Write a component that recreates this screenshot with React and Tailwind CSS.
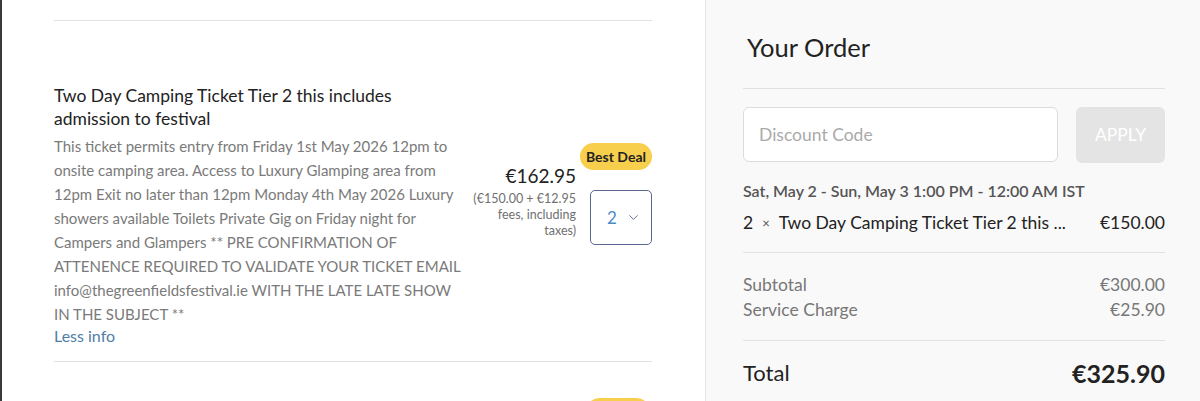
import { ChevronDown } from 'lucide-react';

const description =
  'This ticket permits entry from Friday 1st May 2026 12pm to onsite camping area. Access to Luxury Glamping area from 12pm Exit no later than 12pm Monday 4th May 2026 Luxury showers available Toilets Private Gig on Friday night for Campers and Glampers ** PRE CONFIRMATION OF ATTENENCE REQUIRED TO VALIDATE YOUR TICKET EMAIL info@thegreenfieldsfestival.ie WITH THE LATE LATE SHOW IN THE SUBJECT **';

function TicketRow() {
  return (
    <div className="flex pt-[63px] pb-[15px] border-b border-[#e2e2e2]">
      {/* Ticket info */}
      <div className="w-[412px]">
        <h3 className="text-[17.5px] leading-[23px] text-[#222]">
          Two Day Camping Ticket Tier 2 this includes admission to festival
        </h3>
        <p className="mt-[4px] text-[15px] leading-[24px] text-[#7a7a7a]">{description}</p>
        <button className="block text-[16px] leading-[20px] text-[#4f7ea6]">Less info</button>
      </div>

      {/* Price */}
      <div className="ml-auto mt-[79px] flex flex-col items-end">
        <div className="text-[19px] leading-[26px] text-[#222]">€162.95</div>
        <div className="mt-[2px] w-[104px] text-right text-[12.5px] leading-[16px] text-[#707070]">
          (€150.00 + €12.95 fees, including taxes)
        </div>
      </div>

      {/* Quantity */}
      <div className="ml-[4px] mt-[59px] flex flex-col items-end">
        <span className="h-[27px] w-[72px] whitespace-nowrap text-center rounded-full bg-[#f7cf4d] text-[14px] leading-[27px] font-bold text-[#222]">
          Best Deal
        </span>
        <div className="mt-[20px] w-[62px] h-[55px] rounded-[5px] border-[1.5px] border-[#5a6890] flex items-center pl-[16px] gap-[9px] text-[#4a8cc4]">
          <span className="text-[17px]">2</span>
          <ChevronDown size={15} strokeWidth={1.5} className="text-[#5a6890]" />
        </div>
      </div>
    </div>
  );
}

function OrderPanel() {
  return (
    <aside className="w-[495px] h-full bg-[#f9f9f9] border-l border-[#e6e6e6] pl-[37px] pr-[35px]">
      <h2 className="pt-[32px] pl-[4px] text-[25.5px] leading-[30px] text-[#222]">Your Order</h2>
      <div className="mt-[26px] border-t border-[#e0e0e0]" />

      <div className="mt-[18px] flex gap-[18px]">
        <input
          placeholder="Discount Code"
          className="w-[315px] h-[55px] rounded-[6px] border border-[#dcdcdc] bg-white pl-[15px] text-[17.5px] placeholder:text-[#aaa] outline-none"
        />
        <button className="flex-1 h-[56px] rounded-[6px] bg-[#e4e4e4] text-white text-[17.5px]">APPLY</button>
      </div>

      <div className="mt-[18px] text-[16px] leading-[20px] font-semibold text-[#555]">
        Sat, May 2 - Sun, May 3 1:00 PM - 12:00 AM IST
      </div>
      <div className="mt-[12px] flex items-center text-[17.5px] leading-[20px] text-[#222]">
        <span>2</span>
        <span className="mx-[9px] text-[13px] text-[#555]">×</span>
        <span className="whitespace-nowrap">Two Day Camping Ticket Tier 2 this ...</span>
        <span className="ml-auto">€150.00</span>
      </div>
      <div className="mt-[19px] border-t border-[#e2e2e2]" />

      <div className="mt-[19px] flex justify-between text-[17.5px] leading-[25px] text-[#777]">
        <span>Subtotal</span>
        <span>€300.00</span>
      </div>
      <div className="flex justify-between text-[17.5px] leading-[25px] text-[#777]">
        <span>Service Charge</span>
        <span>€25.90</span>
      </div>
      <div className="mt-[18px] border-t border-[#e2e2e2]" />

      <div className="mt-[17px] flex justify-between items-center text-[#222]">
        <span className="text-[22px] leading-[30px]">Total</span>
        <span className="text-[25px] leading-[30px] font-bold">€325.90</span>
      </div>
    </aside>
  );
}

export default function App() {
  return (
    <div className="h-[401px] w-[1200px] overflow-hidden bg-white flex font-['Lato','Liberation_Sans',sans-serif]">
      <div className="w-[705px] border-l-[2px] border-[#3a3a3a]">
        <div className="ml-[52px] w-[598px]">
          <div className="h-[21px] border-b border-[#e2e2e2]" />
          <TicketRow />
          <div className="flex justify-end pt-[36px] pr-[2px]">
            <span className="h-[27px] w-[64px] rounded-full bg-[#f7cf4d]" />
          </div>
        </div>
      </div>
      <OrderPanel />
    </div>
  );
}
